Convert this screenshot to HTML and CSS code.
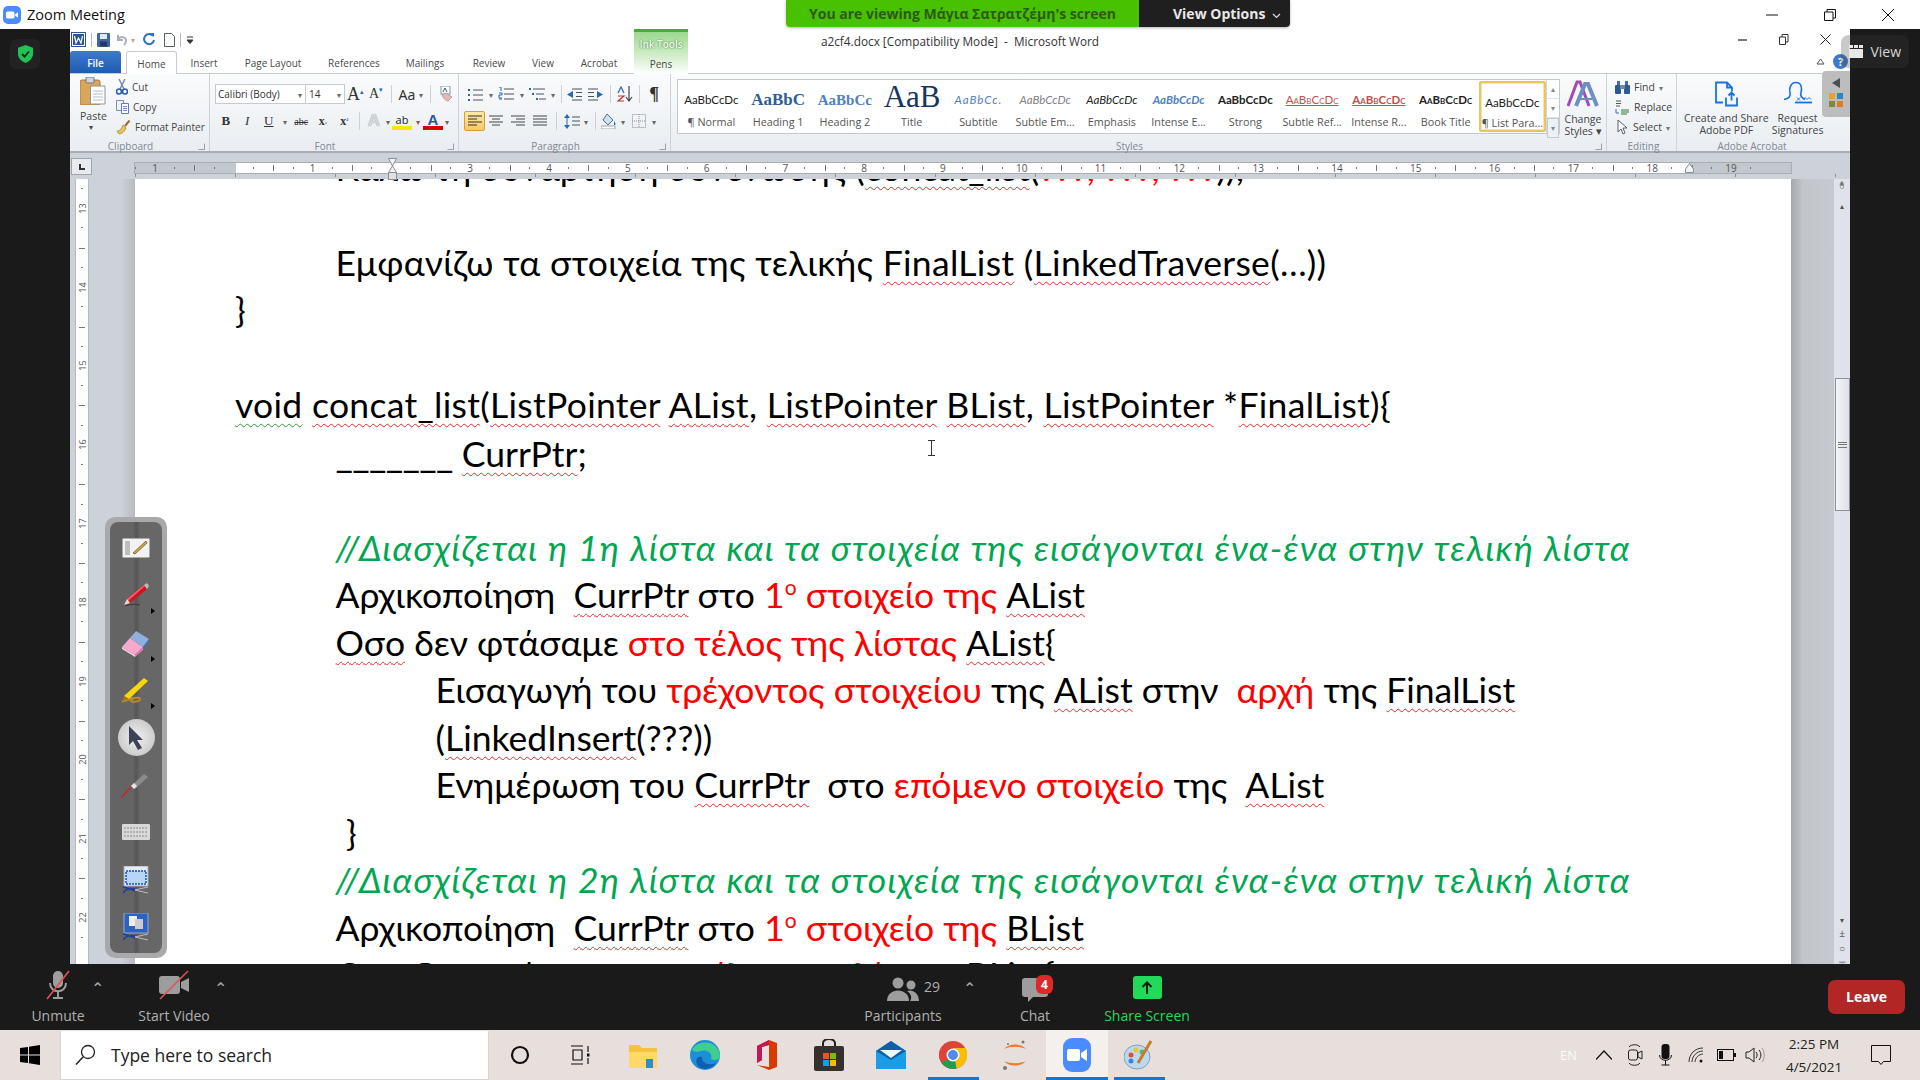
FILE: index.html
```html
<!DOCTYPE html>
<html>
<head>
  <title>Zoom Meeting</title>
  <meta name="viewport" content="width=device-width, initial-scale=1.0">
  <link rel="stylesheet" href="styles.css">
</head>
<body>
<div class="screen">

  <!-- Zoom window title -->
  <div class="zoom-title">
    <svg class="zoom-logo" width="18" height="18" viewBox="0 0 18 18"><rect width="18" height="18" rx="5" fill="#4a8cff"/><rect x="3" y="5.5" width="8.5" height="7" rx="1.6" fill="#fff"/><path d="M12.2 8.3 15 6.2v5.6l-2.8-2.1z" fill="#fff"/></svg>
    <span class="zoom-title-text">Zoom Meeting</span>
    <div class="win-btns">
      <svg width="12" height="12" viewBox="0 0 12 12"><path d="M0 6h12" stroke="#111"/></svg>
      <svg width="12" height="12" viewBox="0 0 12 12"><path d="M.5 3h8.500v8.500H.5zM3 3V.5h8.500V9H9" fill="none" stroke="#111"/></svg>
      <svg width="12" height="12" viewBox="0 0 12 12"><path d="M0 0l12 12M12 0 0 12" stroke="#111"/></svg>
    </div>
  </div>

  <div class="meeting">
    <div class="rail-left">
      <div class="shield-tile">
        <svg width="15" height="18" viewBox="0 0 15 18"><path d="M7.500 0 15 2.800v6C15 13.500 11.500 16.500 7.500 18 3.500 16.500 0 13.500 0 8.800v-6z" fill="#1fc254"/><path d="M4 9l2.600 2.600L11 6.500" fill="none" stroke="#0d2a15" stroke-width="1.800"/></svg>
      </div>
    </div>

    <div class="word">
      <!-- Word title row -->
      <div class="word-title">
        <div class="qat">
          <svg class="q1" width="15" height="15" viewBox="0 0 15 15"><rect x=".5" y=".5" width="14" height="14" fill="#fff" stroke="#2a5699"/><rect x="2" y="2" width="11" height="11" fill="#2a5699"/><path d="M3.500 4l1.500 7 2.500-5 2.500 5 1.500-7" fill="none" stroke="#fff" stroke-width="1.200"/></svg>
          <span class="qat-sep"></span>
          <svg class="q2" width="13" height="14" viewBox="0 0 13 14"><rect width="13" height="14" rx="1" fill="#44649a"/><rect x="3" y="1" width="7" height="5" fill="#dfe8f5"/><rect x="3" y="8.500" width="7" height="5" fill="#1f3a68"/></svg>
          <svg class="q3" width="13" height="13" viewBox="0 0 13 13"><path d="M3 2v5h5M3 7c2-4 8-4 8 1 0 2-1 3-2 4" fill="none" stroke="#a9b0bb" stroke-width="2"/></svg>
          <span class="q-dd">▾</span>
          <svg class="q4" width="12" height="13" viewBox="0 0 12 13"><path d="M10 3a5 5 0 1 0 1 4" fill="none" stroke="#2b73c9" stroke-width="2"/><path d="M7 0h4v4z" fill="#2b73c9"/></svg>
          <svg class="q5" width="11" height="14" viewBox="0 0 11 14"><path d="M.5.5h7l3 3v10H.5z" fill="#fdfdfd" stroke="#58606c"/></svg>
          <span class="qat-sep"></span>
          <svg class="q6" width="8" height="8" viewBox="0 0 8 8"><path d="M1 1h6M1 4h6l-3 3.500z" stroke="#333" fill="#333"/></svg>
        </div>
        <div class="word-doc-name">a2cf4.docx [Compatibility Mode]&nbsp; -&nbsp; Microsoft Word</div>
        <div class="word-btns">
          <svg width="10" height="10" viewBox="0 0 10 10"><path d="M0 5h9" stroke="#222" stroke-width="1.200"/></svg>
          <svg width="10" height="11" viewBox="0 0 10 11"><path d="M.5 3h6v7.500h-6zM3 3V.5h6V8H7" fill="none" stroke="#333"/></svg>
          <svg width="11" height="11" viewBox="0 0 11 11"><path d="M.5.500l10 10M10.500.500l-10 10" stroke="#222"/></svg>
        </div>
      </div>

      <!-- Ribbon tabs -->
      <div class="tabs">
        <div class="tab-file">File</div>
        <div class="tab-home">Home</div>
        <div class="tab w-insert">Insert</div>
        <div class="tab w-layout">Page Layout</div>
        <div class="tab w-refs">References</div>
        <div class="tab w-mail">Mailings</div>
        <div class="tab w-review">Review</div>
        <div class="tab w-view">View</div>
        <div class="tab w-acro">Acrobat</div>
        <div class="tab-pens"><span class="ink-title">Ink Tools</span><span class="pens-text">Pens</span></div>
        <div class="tabs-right">
          <svg width="9" height="7" viewBox="0 0 9 7"><path d="M1 6 4.500 1 8 6z" fill="none" stroke="#555"/></svg>
          <span class="help">?</span>
        </div>
      </div>

      <!-- Ribbon -->
      <div class="ribbon">
        <div class="grp g-clip">
          <div class="grp-body clip-body">
            <div class="paste">
              <svg width="26" height="28" viewBox="0 0 26 28"><rect y="3" width="20" height="25" rx="2" fill="#d9a65c" stroke="#a8783a"/><rect x="6" y="0" width="8" height="6" rx="1" fill="#cfd3da" stroke="#777"/><path d="M10.500 9H25v18H10.500z" fill="#fff" stroke="#8b93a0"/><path d="M13 14h10M13 17h10M13 20h10M13 23h10" stroke="#b6bcc6"/></svg>
              <span class="paste-text">Paste</span>
              <span class="tiny-dd">▾</span>
            </div>
            <div class="clip-list">
              <div class="clip-row"><svg width="12" height="16" viewBox="0 0 12 16"><path d="M3 0l5 10M9 0 4 10" stroke="#7e8a9a" stroke-width="1.500"/><circle cx="3" cy="12.500" r="2.500" fill="none" stroke="#2b5fa8" stroke-width="1.600"/><circle cx="9" cy="12.500" r="2.500" fill="none" stroke="#2b5fa8" stroke-width="1.600"/></svg><span>Cut</span></div>
              <div class="clip-row"><svg width="13" height="14" viewBox="0 0 13 14"><path d="M.5.500h7v10h-7z" fill="#eef3fb" stroke="#7d8ea8"/><path d="M5.500 3.500h7v10h-7z" fill="#fff" stroke="#5d7fb0"/><path d="M7 6.500h4M7 8.500h4M7 10.500h4" stroke="#6b8fc6"/></svg><span>Copy</span></div>
              <div class="clip-row"><svg width="15" height="15" viewBox="0 0 15 15"><path d="M9 6 13.500.5" stroke="#9b6a2d" stroke-width="2"/><path d="M1 11c3 0 5-3 6-6l3 3c-1 3-4 6-7 6z" fill="#e9c05e" stroke="#a5812e" stroke-width=".700"/></svg><span>Format Painter</span></div>
            </div>
          </div>
          <div class="grp-label"><span></span><span class="off-c">Clipboard</span><i class="launcher"></i></div>
        </div>

        <div class="grp g-font">
          <div class="grp-body stack">
            <div class="tool-row">
              <div class="combo c-name"><span>Calibri (Body)</span><b>▾</b></div>
              <div class="combo c-size"><span>14</span><b>▾</b></div>
              <span class="ic w21"><span class="big-a">A<sup>▴</sup></span></span>
              <span class="ic w20"><span class="small-a">A<sup>▾</sup></span></span>
              <span class="sep"></span>
              <span class="ic w20 case-a">Aa</span><span class="dd">▾</span>
              <span class="sep"></span>
              <span class="ic w20"><svg width="16" height="16" viewBox="0 0 16 16"><rect x="3" y="0" width="9" height="8" fill="#fff" stroke="#8a94a4"/><path d="M5 6 7 2l2 4" fill="none" stroke="#2c5d9f"/><path d="M4 9l4-2 6 4-4 4c-2 0-5-3-6-6z" fill="#e9b7b7" stroke="#9a8a8a" stroke-width=".700"/></svg></span>
            </div>
            <div class="tool-row">
              <span class="ic w21h t-b">B</span>
              <span class="ic w21h t-i">I</span>
              <span class="ic w21h t-u">U</span><span class="dd d11">▾</span>
              <span class="ic w21h t-abc">abc</span>
              <span class="ic w21h t-sx">x<sub>₂</sub></span>
              <span class="ic w21h t-sx">x<sup>²</sup></span>
              <span class="sep s4"></span>
              <span class="ic w20 t-fx">A</span><span class="dd">▾</span>
              <span class="ic w20 t-hl">ab</span><span class="dd d11">▾</span>
              <span class="ic w20 t-fc">A</span><span class="dd">▾</span>
            </div>
          </div>
          <div class="grp-label"><span></span><span class="off-c">Font</span><i class="launcher"></i></div>
        </div>

        <div class="grp g-para">
          <div class="grp-body stack para-body">
            <div class="tool-row">
              <span class="ic w20"><svg width="16" height="13" viewBox="0 0 16 13"><path d="M6 2h10M6 7h10M6 12h10" stroke="#4b5361"/><path d="M1 1h2v2H1zM1 6h2v2H1zM1 11h2v2H1z" fill="#2a66b8"/></svg></span><span class="dd d11">▾</span>
              <span class="ic w20"><svg width="16" height="14" viewBox="0 0 16 14"><path d="M6 2h10M6 7h10M6 12h10" stroke="#4b5361"/><path d="M1 0h2v4M1 6h3v2H1v3h3M1 12h3" fill="none" stroke="#2a66b8"/></svg></span><span class="dd d11">▾</span>
              <span class="ic w20"><svg width="18" height="14" viewBox="0 0 18 14"><path d="M5 2h12M8 7h8M11 12h7" stroke="#4b5361"/><path d="M1 1h2v2H1zM4 6h2v2H4zM8 11h2v2H8z" fill="#2a66b8"/></svg></span><span class="dd d11">▾</span>
              <span class="sep sx"></span>
              <span class="ic w21"><svg width="15" height="13" viewBox="0 0 15 13"><path d="M5 1h10M5 12h10M9 4.500h6M9 8.500h6" stroke="#4b5361"/><path d="M0 6.500 6 3v7z" fill="#2a66b8"/></svg></span>
              <span class="ic w21"><svg width="15" height="13" viewBox="0 0 15 13"><path d="M0 1h10M0 12h10M0 4.500h6M0 8.500h6" stroke="#4b5361"/><path d="M15 6.500 9 3v7z" fill="#2a66b8"/></svg></span>
              <span class="sep s4"></span>
              <span class="ic w20 sort-ic"><svg width="16" height="16" viewBox="0 0 16 16"><path d="M12 0v15M9 11l3 4 3-4" fill="none" stroke="#40464f" stroke-width="1.200"/><path d="M1 7l3-6 3 6" fill="none" stroke="#2a66b8" stroke-width="1.200"/><path d="M1 10h6l-6 5h6" fill="none" stroke="#b53a2f" stroke-width="1.200"/></svg></span>
              <span class="sep s4"></span>
              <span class="ic w20 t-pil">¶</span>
            </div>
            <div class="tool-row row2-para">
              <span class="ic w21 on"><svg width="14" height="12" viewBox="0 0 14 12"><path d="M0 1h14M0 4h9M0 7h14M0 10h9" stroke="#333" stroke-width="1.200"/></svg></span>
              <span class="ic w22"><svg width="14" height="12" viewBox="0 0 14 12"><path d="M0 1h14M3 4h8M0 7h14M3 10h8" stroke="#444" stroke-width="1.200"/></svg></span>
              <span class="ic w22"><svg width="14" height="12" viewBox="0 0 14 12"><path d="M0 1h14M5 4h9M0 7h14M5 10h9" stroke="#444" stroke-width="1.200"/></svg></span>
              <span class="ic w22"><svg width="14" height="12" viewBox="0 0 14 12"><path d="M0 1h14M0 4h14M0 7h14M0 10h14" stroke="#444" stroke-width="1.200"/></svg></span>
              <span class="sep"></span>
              <span class="ic w20"><svg width="16" height="15" viewBox="0 0 16 15"><path d="M3 2v11" stroke="#2a66b8"/><path d="M0 4l3-4 3 4zM0 11l3 4 3-4z" fill="#2a66b8"/><path d="M8 3h8M8 7h8M8 11h8" stroke="#4b5361"/></svg></span><span class="dd">▾</span>
              <span class="sep sr"></span>
              <span class="ic w20"><svg width="16" height="16" viewBox="0 0 16 16"><path d="M6 1l6 6-5 5-5-5z" fill="#cfe0f3" stroke="#576a86"/><rect y="13" width="14" height="3" fill="#fff" stroke="#9aa3b0"/><path d="M13 8c2 3 2 4 0 4z" fill="#2a66b8"/></svg></span><span class="dd">▾</span>
              <span class="ic w23"><svg width="14" height="14" viewBox="0 0 14 14"><rect x=".5" y=".5" width="13" height="13" fill="none" stroke="#8b8f96" stroke-dasharray="1 1"/><path d="M7 0v14M0 7h14" stroke="#8b8f96" stroke-dasharray="1 1"/></svg></span><span class="dd">▾</span>
            </div>
          </div>
          <div class="grp-label"><span></span><span class="off-c">Paragraph</span><i class="launcher"></i></div>
        </div>

        <div class="grp g-styles">
          <div class="grp-body styles-body">
            <div class="gallery">
              <div class="style-cell"><span class="sample">AaBbCcDc</span><span class="style-name">¶ Normal</span></div>
              <div class="style-cell"><span class="sample s-h1">AaBbC</span><span class="style-name">Heading 1</span></div>
              <div class="style-cell"><span class="sample s-h2">AaBbCc</span><span class="style-name">Heading 2</span></div>
              <div class="style-cell"><span class="sample s-title">AaB</span><span class="style-name">Title</span></div>
              <div class="style-cell"><span class="sample s-sub">AaBbCc.</span><span class="style-name">Subtitle</span></div>
              <div class="style-cell"><span class="sample s-se">AaBbCcDc</span><span class="style-name">Subtle Em...</span></div>
              <div class="style-cell"><span class="sample s-em">AaBbCcDc</span><span class="style-name">Emphasis</span></div>
              <div class="style-cell"><span class="sample s-ie">AaBbCcDc</span><span class="style-name">Intense E...</span></div>
              <div class="style-cell"><span class="sample s-st">AaBbCcDc</span><span class="style-name">Strong</span></div>
              <div class="style-cell"><span class="sample s-sr">AaBbCcDc</span><span class="style-name">Subtle Ref...</span></div>
              <div class="style-cell"><span class="sample s-ir">AaBbCcDc</span><span class="style-name">Intense R...</span></div>
              <div class="style-cell"><span class="sample s-bt">AaBbCcDc</span><span class="style-name">Book Title</span></div>
              <div class="style-cell selected"><span class="sample">AaBbCcDc</span><span class="style-name">¶ List Para...</span></div>
              <div class="gallery-scroll"><span>▴</span><span>▾</span><span class="gs-more">▾</span></div>
            </div>
            <div class="change-styles">
              <svg width="32" height="28" viewBox="0 0 32 28"><path d="M1 26 10 2h3l9 24" fill="none" stroke="#a24bb5" stroke-width="3"/><path d="M9 26 18 4h3l9 22" fill="none" stroke="#6d8fc4" stroke-width="4"/><path d="M13 19h12" stroke="#6d8fc4" stroke-width="2"/></svg>
              <span>Change</span>
              <span>Styles ▾</span>
            </div>
          </div>
          <div class="grp-label"><span></span><span class="off-c">Styles</span><i class="launcher"></i></div>
        </div>

        <div class="grp g-edit">
          <div class="grp-body edit-body">
            <div class="clip-row"><svg width="15" height="14" viewBox="0 0 15 14"><path d="M2 5V1h3v4M10 5V1h3v4" fill="#3e6fb0"/><rect y="5" width="6" height="9" rx="1" fill="#2c5a99"/><rect x="9" y="5" width="6" height="9" rx="1" fill="#2c5a99"/><rect x="5" y="5" width="5" height="4" fill="#7a8798"/></svg><span>Find</span><em>▾</em></div>
            <div class="clip-row"><svg width="15" height="15" viewBox="0 0 15 15"><path d="M1 1h5M1 3.500h5M1 6h4" stroke="#555"/><path d="M6 10h8M6 12h8M6 14h6" stroke="#2a7a3a"/><path d="M1 9v4h3" fill="none" stroke="#3e6fb0"/></svg><span>Replace</span></div>
            <div class="clip-row"><svg width="14" height="15" viewBox="0 0 14 15"><path d="M3 0v12l3-3 2 5 2-1-2-5h4z" fill="#fff" stroke="#56606e"/></svg><span>Select</span><em>▾</em></div>
          </div>
          <div class="grp-label"><span></span><span class="edit-name">Editing</span><span></span></div>
        </div>

        <div class="grp g-adobe">
          <div class="grp-body adobe-body">
            <div class="adobe-btn">
              <svg width="24" height="26" viewBox="0 0 24 26"><path d="M9 22H2V2h11l5 5v4" fill="none" stroke="#1473e6" stroke-width="1.800"/><path d="M13 2v5h5" fill="none" stroke="#1473e6" stroke-width="1.800"/><path d="M12 17v8h11v-8M17.500 20V12M14.500 15l3-3 3 3" fill="none" stroke="#1473e6" stroke-width="1.800"/></svg>
              <span>Create and Share</span><span>Adobe PDF</span>
            </div>
            <div class="adobe-btn">
              <svg width="30" height="26" viewBox="0 0 30 26"><path d="M1 19c5-1 7-3 6-7-1-3 0-10 6-10s6 7 5 10c-1 3 0 5 4 7" fill="none" stroke="#1473e6" stroke-width="1.600"/><path d="M12 22h17" stroke="#1473e6" stroke-width="1.800"/><path d="M14 17l3 3M17 17l-3 3M20 19l2-2 2 2 2-2 2 2" fill="none" stroke="#1473e6"/></svg>
              <span>Request</span><span>Signatures</span>
            </div>
          </div>
          <div class="grp-label"><span></span><span>Adobe Acrobat</span><span></span></div>
        </div>
      </div>

      <!-- Horizontal ruler -->
      <div class="ruler-row">
        <div class="ruler-corner"><span></span></div>
        <div class="ruler-band">
          <div class="ruler-shade-l"></div>
          <div class="ruler-shade-r"></div>
          <div class="ruler-cells">
            <span>1</span><span></span><span>1</span><span></span><span>3</span><span>4</span><span>5</span><span>6</span><span>7</span><span>8</span><span>9</span><span>10</span><span>11</span><span>12</span><span>13</span><span>14</span><span>15</span><span>16</span><span>17</span><span>18</span><span>19</span>
          </div>
        </div>
      </div>

      <!-- Document -->
      <div class="doc-area">
        <div class="vruler">
          <div class="vruler-cells">
            <span><i>13</i></span><span><i>14</i></span><span><i>15</i></span><span><i>16</i></span><span><i>17</i></span><span><i>18</i></span><span><i>19</i></span><span><i>20</i></span><span><i>21</i></span><span><i>22</i></span>
          </div>
        </div>
        <div class="gutter-l"></div>
        <div class="page">
          <div class="lines">
            <div class="line in1 first">Καλώ τη συνάρτηση συνένωσης (<span class="sp">concat_list</span>(<span class="red">???, ???, ???</span>));</div>
            <div class="line"></div>
            <div class="line in1 wide">Εμφανίζω τα στοιχεία της τελικής <span class="sp">FinalList</span> (<span class="sp">LinkedTraverse</span>(…))</div>
            <div class="line">}</div>
            <div class="line"></div>
            <div class="line wide"><span class="gsp">void</span> <span class="sp">concat_list</span>(<span class="sp">ListPointer</span> <span class="sp">AList</span>, <span class="sp">ListPointer</span> <span class="sp">BList</span>, <span class="sp">ListPointer</span> *<span class="sp">FinalList</span>){</div>
            <div class="line in1"><span class="blank">_______</span> <span class="sp">CurrPtr</span>;</div>
            <div class="line"></div>
            <div class="line in1 comment">//Διασχίζεται η 1η λίστα και τα στοιχεία της εισάγονται ένα-ένα στην τελική λίστα</div>
            <div class="line in1">Αρχικοποίηση&nbsp; <span class="sp">CurrPtr</span> στο <span class="red">1<sup>ο</sup> στοιχείο της</span> <span class="sp">AList</span></div>
            <div class="line in1"><span class="sp">Οσο</span> δεν φτάσαμε <span class="red">στο τέλος της λίστας</span> <span class="sp">AList</span>{</div>
            <div class="line in2">Εισαγωγή του <span class="red">τρέχοντος στοιχείου</span> της <span class="sp">AList</span> στην&nbsp; <span class="red">αρχή</span> της <span class="sp">FinalList</span></div>
            <div class="line in2">(<span class="sp">LinkedInsert</span>(???))</div>
            <div class="line in2">Ενημέρωση του <span class="sp">CurrPtr</span>&nbsp; στο <span class="red">επόμενο στοιχείο</span> της&nbsp; <span class="sp">AList</span></div>
            <div class="line in1b">}</div>
            <div class="line in1 comment">//Διασχίζεται η 2η λίστα και τα στοιχεία της εισάγονται ένα-ένα στην τελική λίστα</div>
            <div class="line in1">Αρχικοποίηση&nbsp; <span class="sp">CurrPtr</span> στο <span class="red">1<sup>ο</sup> στοιχείο της</span> <span class="sp">BList</span></div>
            <div class="line in1"><span class="sp">Οσο</span> δεν φτάσαμε <span class="red">στο τέλος της λίστας</span> <span class="sp">BList</span>{</div>
          </div>
        </div>
        <div class="gutter-r"></div>
        <div class="vscroll">
          <div class="vs-tools">
            <svg width="14" height="14" viewBox="0 0 14 14"><path d="M1 2h9v7H1z" fill="#fff" stroke="#666"/><path d="M4 9l4-3 4 2v4H6z" fill="#ddd" stroke="#666"/></svg>
            <svg width="13" height="13" viewBox="0 0 13 13"><path d="M3 8V4h1v3-5h1v5-6h1v6-5h1v5-3h1v7H4z" fill="#eee" stroke="#666" stroke-width=".800"/></svg>
          </div>
          <span class="vs-arrow">▲</span>
          <div class="vs-thumb"><span></span></div>
          <span class="vs-grow"></span>
          <span class="vs-arrow">▼</span>
          <span class="vs-nav">±</span>
          <span class="vs-nav">○</span>
          <span class="vs-nav">∓</span>
        </div>
      </div>
    </div>

    <div class="rail-right"></div>
  </div>

  <!-- Zoom controls -->
  <div class="zoom-bar">
    <div class="zb-item zb-mic">
      <svg width="30" height="30" viewBox="0 0 30 30"><rect x="10" y="1" width="10" height="17" rx="5" fill="#9d9d9d"/><path d="M7 13c0 11 16 11 16 0M15 21v6M10 28h10" fill="none" stroke="#9d9d9d" stroke-width="2"/><path d="M4 29 26 1" stroke="#e05252" stroke-width="1.600"/></svg>
      <span>Unmute</span>
    </div>
    <span class="caret caret-mic">⌃</span>
    <div class="zb-item zb-video">
      <svg width="32" height="30" viewBox="0 0 32 30"><rect x="1" y="6" width="21" height="18" rx="3" fill="#9d9d9d"/><path d="M23 12l8-4v14l-8-4z" fill="#9d9d9d"/><path d="M2 29 30 1" stroke="#e05252" stroke-width="1.600"/></svg>
      <span>Start Video</span>
    </div>
    <span class="caret caret-vid">⌃</span>
    <div class="zb-item zb-part">
      <div class="part-top">
        <svg width="32" height="24" viewBox="0 0 32 24"><circle cx="11" cy="6" r="5.500" fill="#9d9d9d"/><path d="M0 24c0-14 22-14 22 0z" fill="#9d9d9d"/><circle cx="24" cy="8" r="4.500" fill="#9d9d9d"/><path d="M23 24c3-4 0-8-3-10 5-2 12 2 12 10z" fill="#9d9d9d"/></svg>
        <span class="part-count">29</span>
      </div>
      <span>Participants</span>
    </div>
    <span class="caret caret-part">⌃</span>
    <div class="zb-item zb-chat">
      <div class="chat-top">
        <svg width="26" height="24" viewBox="0 0 26 24"><path d="M3 0h20a3 3 0 0 1 3 3v13a3 3 0 0 1-3 3H11l-5 5v-5H3a3 3 0 0 1-3-3V3a3 3 0 0 1 3-3z" fill="#9d9d9d"/></svg>
        <span class="badge">4</span>
      </div>
      <span>Chat</span>
    </div>
    <div class="zb-item zb-share">
      <div class="share-ic"><svg width="12" height="13" viewBox="0 0 12 13"><path d="M6 13V2M1.500 6 6 1.500 10.500 6" fill="none" stroke="#0b1f10" stroke-width="2"/></svg></div>
      <span>Share Screen</span>
    </div>
    <div class="leave">Leave</div>
  </div>

  <!-- Windows taskbar -->
  <div class="taskbar">
    <div class="start">
      <svg width="20" height="20" viewBox="0 0 20 20"><path d="M0 3l8-1v7.500H0zM9 1.800 20 0v9.500H9zM0 10.500h8V18l-8-1zM9 10.500h11V20L9 18.200z" fill="#000"/></svg>
    </div>
    <div class="search">
      <svg width="22" height="22" viewBox="0 0 22 22"><circle cx="13" cy="8" r="6.500" fill="none" stroke="#222" stroke-width="1.300"/><path d="M8 13 1 20.500" stroke="#222" stroke-width="1.500"/></svg>
      <span>Type here to search</span>
    </div>
    <div class="task-sys">
      <svg width="20" height="20" viewBox="0 0 20 20"><circle cx="10" cy="10" r="8" fill="none" stroke="#111" stroke-width="2.200"/></svg>
      <svg width="20" height="20" viewBox="0 0 20 20"><path d="M1 1h12M1 19h12M3 5h9v10H3zM18 1v6M18 13v6" fill="none" stroke="#111" stroke-width="1.200"/><rect x="17" y="8.500" width="2.500" height="3" fill="#111"/></svg>
    </div>
    <div class="task-apps">
      <span class="app"><svg width="28" height="26" viewBox="0 0 28 26"><path d="M0 3h10l3 3h15v20H0z" fill="#f4c23d"/><path d="M0 10h28v16H0z" fill="#ffd968"/><path d="M17 17h7v9h-7z" fill="#2c8ad8"/></svg></span>
      <span class="app"><svg width="30" height="30" viewBox="0 0 30 30"><circle cx="15" cy="15" r="15" fill="#1d8fd9"/><path d="M2 10C6 0 28-2 30 16c0 4-6 5-9 3 2-6-4-10-10-8-4 1-7 1-9-1z" fill="#3ecf8e"/><path d="M12 17c0 6 6 9 14 6-4 6-13 8-18 3-3-4-2-11 4-9z" fill="#0f5fb0"/></svg></span>
      <span class="app"><svg width="24" height="30" viewBox="0 0 24 30"><path d="M2 6 14 0l8 3v24l-8 3-12-5 12 2V5L7 7v13l-5 3z" fill="#d83b01"/><path d="M2 6 14 0v5L7 7v13l-5 3z" fill="#c2185b"/></svg></span>
      <span class="app"><svg width="30" height="32" viewBox="0 0 30 32"><path d="M9 8V4a6 4 0 0 1 12 0v4" fill="none" stroke="#222" stroke-width="2"/><rect y="7" width="30" height="25" rx="2" fill="#34312f"/><rect x="9" y="14" width="6" height="6" fill="#f25022"/><rect x="16" y="14" width="6" height="6" fill="#7fba00"/><rect x="9" y="21" width="6" height="6" fill="#00a4ef"/><rect x="16" y="21" width="6" height="6" fill="#ffb900"/></svg></span>
      <span class="app"><svg width="30" height="28" viewBox="0 0 30 28"><path d="M0 10 15 0l15 10v18H0z" fill="#1a9ce6"/><path d="M0 10 15 0l15 10-15 9z" fill="#0f5ea8"/><path d="M4 9h22l-11 8z" fill="#eef6fc"/></svg></span>
      <span class="app app-line"><svg width="28" height="28" viewBox="0 0 28 28"><circle cx="14" cy="14" r="14" fill="#db4437"/><path d="M14 14 1.500 20A14 14 0 0 1 3 5.500z" fill="#db4437"/><path d="M2 21a14 14 0 0 0 15 6.700L22 16z" fill="#1e9e53"/><path d="M14 7h12.500a14 14 0 0 1-9 20.500z" fill="#fbbc05"/><circle cx="14" cy="14" r="6.500" fill="#fff"/><circle cx="14" cy="14" r="5" fill="#4d8bf5"/></svg></span>
      <span class="app"><svg width="26" height="32" viewBox="0 0 26 32"><path d="M2 10c5-6 17-6 22 0-6-3-16-3-22 0zM2 22c5 6 17 6 22 0-6 3-16 3-22 0z" fill="#f37726"/><circle cx="21" cy="3" r="1.500" fill="#767677"/><circle cx="3" cy="29" r="2" fill="#767677"/><circle cx="6" cy="5" r="1" fill="#767677"/></svg></span>
      <span class="app app-on"><svg width="28" height="34" viewBox="0 0 28 34"><rect width="28" height="34" rx="9" fill="#4a8cff"/><rect x="4" y="11" width="13" height="12" rx="2" fill="#fff"/><path d="M18 15l6-4v12l-6-4z" fill="#fff"/></svg></span>
      <span class="app app-line"><svg width="30" height="30" viewBox="0 0 30 30"><ellipse cx="13" cy="17" rx="13" ry="12" fill="#bcd9ee" stroke="#7f9fbd"/><circle cx="7" cy="15" r="2.500" fill="#e44b3a"/><circle cx="12" cy="10" r="2.500" fill="#f2c230"/><circle cx="18" cy="12" r="2.500" fill="#5db85c"/><circle cx="7" cy="21" r="2.500" fill="#3f82d6"/><path d="M14 23 27 1" stroke="#c77b2d" stroke-width="3"/></svg></span>
    </div>
    <div class="tray">
      <span class="tray-en">EN</span>
      <svg class="t-up" width="16" height="10" viewBox="0 0 16 10"><path d="M0 9.500 8 1l8 8.500" fill="none" stroke="#111" stroke-width="1.200"/></svg>
      <svg class="t-cam" width="15" height="22" viewBox="0 0 15 22"><path d="M1 3c2-3 9-3 11 0M1 19c2 3 9 3 11 0" fill="none" stroke="#222"/><rect x=".5" y="6" width="9" height="10" rx="2" fill="none" stroke="#222"/><path d="M10 9l4-2v8l-4-2z" fill="none" stroke="#222"/></svg>
      <svg class="t-mic" width="13" height="22" viewBox="0 0 13 22"><rect x="2.500" width="8" height="15" rx="3" fill="#111"/><path d="M.5 11c0 7 12 7 12 0M6.500 16v5M2.500 21h8" fill="none" stroke="#111"/></svg>
      <svg class="t-wifi" width="16" height="16" viewBox="0 0 16 16"><path d="M1 15C1 7 7 1 15 1M4 15c0-6 5-11 11-11M7 15c0-4 4-8 8-8" fill="none" stroke="#333"/><circle cx="13" cy="14" r="1.500" fill="#111"/></svg>
      <svg class="t-bat" width="19" height="12" viewBox="0 0 19 12"><rect x=".5" y=".5" width="16" height="11" fill="none" stroke="#111"/><rect x="2" y="2" width="4" height="8" fill="#111"/><rect x="17" y="4" width="2" height="4" fill="#111"/></svg>
      <svg class="t-vol" width="20" height="18" viewBox="0 0 20 18"><path d="M1 6h3l5-4v14l-5-4H1z" fill="none" stroke="#222"/><path d="M11 6c1.500 2 1.500 4 0 6M14 4c2.500 3 2.500 7 0 10" fill="none" stroke="#222"/><path d="M17 2c3 4 3 10 0 14" fill="none" stroke="#999"/></svg>
      <div class="clock"><span>2:25 PM</span><span>4/5/2021</span></div>
      <svg class="t-note" width="20" height="20" viewBox="0 0 20 20"><path d="M.5.5h19v16h-7l-2.500 3-2.500-3h-7z" fill="none" stroke="#111"/></svg>
    </div>
  </div>

  <!-- overlays from the meeting window -->
  <div class="banner">
    <div class="banner-msg">You are viewing Μάγια Σατρατζέμη's screen</div>
    <div class="banner-opt">View Options <svg width="9" height="6" viewBox="0 0 9 6"><path d="M1 1l3.500 3.500L8 1" fill="none" stroke="#ddd" stroke-width="1.200"/></svg></div>
  </div>

  <div class="view-btn">
    <svg width="14" height="13" viewBox="0 0 14 13"><rect y="4" width="14" height="9" fill="#e8e8e8"/><path d="M0 0h4v3H0zM5 0h4v3H5zM10 0h4v3h-4z" fill="#e8e8e8"/></svg>
    <span>View</span>
  </div>

  <div class="acro-pane">
    <svg width="10" height="10" viewBox="0 0 10 10"><path d="M9 0v10L1 5z" fill="#4b4f55"/></svg>
    <div class="acro-tiles"><i class="t-y"></i><i class="t-b"></i><i class="t-g"></i><i class="t-o"></i></div>
  </div>

  <!-- ruler markers sit on the band -->
  <svg class="indent-mark" width="9" height="22" viewBox="0 0 9 22"><path d="M.5.5h8L4.500 8l4 6.500H.5L4.500 8z" fill="#f2f3f5" stroke="#8a8e95"/><rect x=".5" y="14.500" width="8" height="7" fill="#dfe1e5" stroke="#8a8e95"/></svg>
  <svg class="right-mark" width="9" height="10" viewBox="0 0 9 10"><path d="M.5 9.500V6L4.500.5l4 5.500v3.500z" fill="#f2f3f5" stroke="#8a8e95"/></svg>

  <div class="ink-bar">
    <div class="ink-inner">
      <span class="ink-ic"><svg width="28" height="20" viewBox="0 0 28 20"><rect x=".5" y=".5" width="27" height="19" rx="1" fill="#f2f2f2" stroke="#aaa"/><rect x="3" y="3" width="5" height="14" fill="#bdbdbd"/><path d="M11 15 24 3l1 2-12 11z" fill="#e4a72c" stroke="#333" stroke-width=".600"/></svg></span>
      <span class="ink-ic"><svg width="30" height="28" viewBox="0 0 30 28"><path d="M4 25c5-2 11-2 15-1" fill="none" stroke="#3a3a3a" stroke-width="1.200"/><path d="M3 24 6 18 23 4l3 4L9 22z" fill="#d6101e"/><path d="M6 18 23 4l1 1L7 20z" fill="#f2616a"/><path d="M23 4l3-2 2 3-2 3z" fill="#bcbcbc"/><path d="M3 24l3-6 3 4z" fill="#ddd"/></svg><i class="ink-tri"></i></span>
      <span class="ink-ic"><svg width="28" height="29" viewBox="0 0 28 29"><path d="M0 19 8 10 21 19 13 27z" fill="#f7a8cc"/><path d="M8 10 14 3 27 11 21 19z" fill="#8fb0dc"/><path d="M21 19 27 11 27 13 21 22z" fill="#3d6fc0"/><path d="M13 27 21 19 21 22 13 29z" fill="#e57fb0"/><path d="M0 19 13 27 13 29 0 21z" fill="#f4c9dc"/></svg><i class="ink-tri"></i></span>
      <span class="ink-ic"><svg width="30" height="28" viewBox="0 0 30 28"><path d="M1 26c5-5 14-5 10-2s8 2 8-1-8 0-16 2" fill="none" stroke="#b8892b" stroke-width="2"/><path d="M3 20 23 2l4 3L8 23z" fill="#f5d90a"/><path d="M3 20l5 3-6 2z" fill="#a07a20"/></svg><i class="ink-tri"></i></span>
      <span class="ink-cursor"><svg width="16" height="24" viewBox="0 0 16 24"><path d="M1 0v19l4-4 5 9 4-2-5-8h6z" fill="#3e4259"/></svg></span>
      <span class="ink-ic"><svg width="30" height="28" viewBox="0 0 30 28"><path d="M0 27 11 15" stroke="#c9252b" stroke-width="1.500"/><path d="M10 15 23 3l4 3-13 12z" fill="#8b8b8b"/><path d="M10 15l3-3 3 3-3 3z" fill="#e6e6e6"/></svg></span>
      <span class="ink-ic"><svg width="28" height="16" viewBox="0 0 28 16"><rect width="28" height="16" rx="1" fill="#d8d8d8"/><path d="M2 4h24M2 8h24M2 12h24" stroke="#8a8a8a" stroke-dasharray="2 1"/></svg></span>
      <span class="ink-ic"><svg width="26" height="28" viewBox="0 0 26 28"><rect x="1" width="24" height="20" fill="#e8edf4" stroke="#aaa"/><rect x="3" y="5" width="20" height="13" fill="#b8d5f7" stroke="#0a4fd6" stroke-dasharray="2 1" stroke-width="1.500"/><path d="M0 27c4-5 8-5 12-4M0 21c4 1 8 2 12 4" fill="none" stroke="#1a3ea5" stroke-width="1.500"/><path d="M12 24l13-3M12 24l13 3" stroke="#bbb"/></svg></span>
      <span class="ink-ic"><svg width="26" height="28" viewBox="0 0 26 28"><rect x="1" width="24" height="20" fill="#2c62c6" stroke="#9ab"/><rect x="6" y="3" width="8" height="10" fill="#eee"/><rect x="12" y="6" width="8" height="10" fill="#ccc"/><path d="M0 27c4-5 8-5 12-4M0 21c4 1 8 2 12 4" fill="none" stroke="#1a3ea5" stroke-width="1.500"/><path d="M12 24l13-3M12 24l13 3" stroke="#bbb"/></svg></span>
    </div>
  </div>

  <svg class="ibeam" width="7" height="16" viewBox="0 0 7 16"><path d="M0 .5h7M0 15.500h7M3.500 .5v15" stroke="#333"/></svg>

</div>
</body>
</html>
```

FILE: styles.css
```css
* {
  box-sizing: border-box;
}

body {
  margin: 0;
  background: #1a1a1a;
  font-family: "Open Sans", "Noto Sans", sans-serif;
  color: #444;
}

.screen {
  position: relative;
  width: 1920px;
  height: 1080px;
  overflow: hidden;
  display: flex;
  flex-direction: column;
}

/* Zoom title */
.zoom-title {
  height: 29px;
  background: #fff;
  display: flex;
  align-items: center;
  padding-left: 3px;
  color: #111;
}

.zoom-title-text {
  font-size: 14.500px;
  margin-left: 6px;
}

.win-btns {
  margin-left: auto;
  display: flex;
  gap: 46px;
  padding-right: 26px;
}

/* middle part */
.meeting {
  height: 935px;
  display: flex;
}

.rail-left,
.rail-right {
  width: 70px;
  background: #1a1a1a;
}

.shield-tile {
  width: 30px;
  height: 30px;
  margin: 10px 0 0 10px;
  background: #222;
  border-radius: 6px;
  display: flex;
  align-items: center;
  justify-content: center;
}

.word {
  width: 1780px;
  background: #fff;
  display: flex;
  flex-direction: column;
}

.word-title {
  height: 21px;
  display: grid;
  grid-template-columns: 1fr auto 1fr;
  align-items: center;
}

.qat {
  display: flex;
  align-items: center;
  padding-left: 1px;
}

.qat-sep {
  width: 1px;
  height: 14px;
  background: #b9bec6;
  margin: 0 5px;
}

.q3 { margin-left: 5px; }
.q-dd { font-size: 8px; color: #aaa; margin: 0 8px 0 3px; }
.q5 { margin-left: 9px; }

.word-doc-name {
  font-size: 11.800px;
  color: #333;
  padding-top: 2px;
}

.word-btns {
  display: flex;
  justify-content: flex-end;
  align-items: center;
  gap: 31px;
  padding-right: 19px;
}

/* tabs */
.tabs {
  height: 24px;
  display: flex;
  align-items: flex-end;
  font-size: 10px;
  color: #4a4a4a;
  border-bottom: 1px solid #c8ccd2;
}

.tab-file {
  width: 51px;
  height: 22px;
  padding-top: 1px;
  border-radius: 3px 3px 0 0;
  background: linear-gradient(#3e79c9, #1e5cb3);
  color: #fff;
  display: flex;
  align-items: center;
  justify-content: center;
  font-weight: 600;
}

.tab-home {
  width: 51px;
  height: 23px;
  padding-top: 1px;
  margin-left: 5px;
  margin-bottom: -1px;
  background: #fff;
  border: 1px solid #c8ccd2;
  border-bottom: none;
  border-radius: 3px 3px 0 0;
  display: flex;
  align-items: center;
  justify-content: center;
}

.tab {
  height: 22px;
  padding-top: 2px;
  display: flex;
  align-items: center;
  justify-content: center;
}

.w-insert { width: 54px; }
.w-layout { width: 84px; }
.w-refs { width: 78px; }
.w-mail { width: 64px; }
.w-review { width: 64px; }
.w-view { width: 44px; }
.w-acro { width: 68px; }

.tab-pens {
  width: 54px;
  height: 45px;
  margin-left: 1px;
  margin-bottom: -1px;
  border-top: 3px solid #3bb52e;
  background: linear-gradient(#9cd98e, #d6eecf 60%, #fff);
  display: flex;
  flex-direction: column;
  align-items: center;
}

.ink-title {
  margin-top: 5px;
  font-size: 10px;
  color: #f4faf1;
  font-weight: 600;
  text-shadow: 0 0 2px #5c8f52, 0 0 1px #5c8f52;
}

.pens-text {
  margin-top: 6px;
}

.tabs-right {
  margin-left: auto;
  height: 24px;
  display: flex;
  align-items: center;
  gap: 8px;
  padding: 0 2px 0 0;
}

.help {
  width: 15px;
  height: 15px;
  border-radius: 50%;
  background: #3f78c8;
  color: #fff;
  font-size: 11px;
  font-weight: 700;
  line-height: 15px;
  text-align: center;
}

/* ribbon */
.ribbon {
  height: 79px;
  display: flex;
  background: linear-gradient(#fafbfc, #e9edf1);
  border-bottom: 2px solid #a9adb3;
  font-size: 10px;
}

.grp {
  display: flex;
  flex-direction: column;
  border-right: 1px solid #cfd3d9;
}

.grp-body {
  height: 65px;
}

.grp-label {
  height: 12px;
  padding-top: 1px;
  display: grid;
  grid-template-columns: 1fr auto 1fr;
  align-items: center;
  color: #808894;
  font-size: 10px;
  line-height: 12px;
}

.off-c {
  margin-right: 18px;
}

.edit-name {
  margin-left: 4px;
}

.launcher {
  justify-self: end;
  width: 7px;
  height: 7px;
  margin-right: 4px;
  border: 1px solid #9aa2ad;
  border-top-color: transparent;
  border-left-color: transparent;
}

.g-clip { width: 140px; }
.g-font { width: 249px; }
.g-para { width: 212px; }
.g-styles { width: 936px; }
.g-edit { width: 70px; }
.g-adobe { width: 150px; border-right: none; }

.clip-body {
  display: flex;
  padding-top: 3px;
}

.paste {
  width: 46px;
  padding-left: 10px;
  display: flex;
  flex-direction: column;
  align-items: flex-start;
}

.paste-text {
  font-size: 10.500px;
  margin-top: 5px;
  line-height: 13px;
}

.tiny-dd {
  font-size: 8px;
  line-height: 8px;
  margin-left: 9px;
}

.clip-list {
  display: flex;
  flex-direction: column;
}

.clip-row {
  height: 20px;
  display: flex;
  align-items: center;
  gap: 4px;
  white-space: nowrap;
}

.clip-row svg {
  flex: none;
}

.clip-row em {
  font-style: normal;
  font-size: 8px;
  color: #777;
}

.stack {
  padding: 10px 0 0 5px;
  display: flex;
  flex-direction: column;
  gap: 7px;
}

.tool-row {
  height: 20px;
  display: flex;
  align-items: center;
}

.combo {
  height: 20px;
  display: flex;
  align-items: center;
  justify-content: space-between;
  padding: 0 3px 0 2px;
  background: #fff;
  border: 1px solid #c5cad1;
  font-size: 10px;
  color: #333;
}

.combo b {
  font-size: 8px;
  font-weight: 400;
  color: #666;
}

.c-name { width: 91px; }
.c-size { width: 40px; margin-left: -1px; padding-left: 3px; }

.ic {
  height: 20px;
  display: flex;
  align-items: center;
  justify-content: center;
  flex: none;
}

.w20 { width: 20px; }
.w21 { width: 21px; }
.w21h { width: 21.500px; }
.w22 { width: 22px; }
.w23 { width: 23px; }

.dd {
  width: 8px;
  flex: none;
  font-size: 8px;
  color: #666;
  text-align: center;
}

.d11 { width: 11px; }

.sep {
  width: 1px;
  height: 18px;
  flex: none;
  margin: 0 5px;
  background: #cdd1d7;
}

.sx { margin: 0 2.500px; }
.s4 { margin: 0 4px; }
.sr { margin: 0 3px 0 5px; }

.big-a,
.small-a,
.case-a,
.t-b,
.t-i,
.t-u,
.t-abc,
.t-sx,
.t-pil {
  font-family: "Liberation Serif", serif;
  color: #333;
}

.big-a { font-size: 18px; }
.small-a { font-size: 14px; }
.big-a sup,
.small-a sup { font-size: 7px; color: #2a66b8; vertical-align: 6px; line-height: 0; }
.case-a { font-size: 14px; font-family: "Noto Sans", sans-serif; }
.t-b { font-size: 13px; font-weight: 700; }
.t-i { font-size: 13px; font-style: italic; }
.t-u { font-size: 13px; text-decoration: underline; }
.t-abc { font-size: 10px; text-decoration: line-through; }
.t-sx { font-size: 12px; font-weight: 700; }
.t-sx sub,
.t-sx sup { font-size: 7px; color: #2a66b8; line-height: 0; }
.t-pil { font-size: 18px; font-weight: 700; }
.t-fx { font-size: 17px; font-weight: 700; color: #d4d8dd; text-shadow: 0 0 1px #888; font-family: "Liberation Sans", sans-serif; }
.t-hl { font-size: 11px; color: #222; border-bottom: 4px solid #f5e900; height: 17px; line-height: 11px; }
.t-fc { font-size: 15px; font-weight: 700; color: #2a5699; border-bottom: 4px solid #d90000; height: 18px; line-height: 13px; font-family: "Liberation Sans", sans-serif; }

.para-body {
  padding-left: 6px;
}

.row2-para {
  margin-left: -1px;
}

.on {
  background: linear-gradient(#fde9a8, #f9c866);
  border: 1px solid #d69f35;
  border-radius: 2px;
}

.styles-body {
  display: flex;
  padding: 5px 0 0 6px;
}

.gallery {
  width: 883px;
  height: 55px;
  display: flex;
  background: #fff;
  border: 1px solid #c4c9d0;
}

.style-cell {
  width: 66.750px;
  flex: none;
  display: flex;
  flex-direction: column;
  align-items: center;
  overflow: hidden;
}

.sample {
  height: 35px;
  line-height: 40px;
  width: 56px;
  text-align: center;
  overflow: hidden;
  white-space: nowrap;
  font-family: Lato, sans-serif;
  font-size: 11.500px;
  color: #222;
}

.s-h1 { font-family: "Liberation Serif", serif; font-weight: 700; font-size: 17px; color: #2f5e96; }
.s-h2 { font-family: "Liberation Serif", serif; font-weight: 700; font-size: 15px; color: #4f81bd; }
.s-title { font-family: "Liberation Serif", serif; font-size: 31px; color: #17365d; line-height: 33px; }
.s-sub { font-style: italic; color: #4f81bd; letter-spacing: 1px; }
.s-se { font-style: italic; color: #808080; }
.s-em { font-style: italic; }
.s-ie { font-style: italic; font-weight: 700; color: #4f81bd; }
.s-st { font-weight: 700; }
.s-sr { font-variant: small-caps; color: #c0504d; text-decoration: underline; }
.s-ir { font-variant: small-caps; color: #c0504d; font-weight: 700; text-decoration: underline; }
.s-bt { font-variant: small-caps; font-weight: 700; }

.style-name {
  font-size: 10.800px;
  line-height: 13px;
  white-space: nowrap;
  color: #555;
}

.selected {
  margin: 1px 0;
  border: 2px solid #e8c465;
  border-radius: 2px;
  outline: 1px solid #f4e3ae;
  outline-offset: -3px;
}

.selected .sample { height: 33px; }

.gallery-scroll {
  flex: 1;
  display: flex;
  flex-direction: column;
  border-left: 1px solid #d3d7dc;
  font-size: 8px;
  color: #888;
  text-align: center;
}

.gallery-scroll span {
  flex: 1;
  line-height: 18px;
  border-bottom: 1px solid #e0e3e7;
}

.gallery-scroll .gs-more {
  background: #eef1f4;
  border: 1px solid #c4c9d0;
}

.change-styles {
  flex: 1;
  display: flex;
  flex-direction: column;
  align-items: center;
  font-size: 10.500px;
  line-height: 12px;
}

.change-styles svg {
  margin-bottom: 5px;
  margin-top: 1px;
}

.edit-body {
  padding: 3px 0 0 8px;
  display: flex;
  flex-direction: column;
  font-size: 10.500px;
}

.adobe-body {
  display: flex;
  padding: 6px 0 0 7px;
}

.adobe-btn {
  display: flex;
  flex-direction: column;
  align-items: center;
  line-height: 12px;
  white-space: nowrap;
  font-size: 10.500px;
}

.adobe-btn svg {
  height: 27px;
  margin-bottom: 5px;
}

.adobe-btn + .adobe-btn {
  margin-left: 3px;
}

/* horizontal ruler */
.ruler-row {
  height: 26px;
  display: flex;
  align-items: flex-start;
  background:
    linear-gradient(90deg, #8b8f96 1px, transparent 1px) 65px 21px / 100px 3px repeat-x,
    #cdd1d8;
}

.ruler-corner {
  width: 21px;
  height: 17px;
  margin: 5px 0 0 1px;
  background: #e8eaee;
  border: 1px solid #a1a5ab;
  display: flex;
  align-items: center;
  justify-content: center;
}

.ruler-corner span {
  width: 6px;
  height: 6px;
  border-left: 2px solid #333;
  border-bottom: 2px solid #333;
}

.ruler-band {
  position: relative;
  width: 1658px;
  height: 12px;
  margin: 9px 0 0 42px;
  overflow: hidden;
  background: #fdfdfe;
  border: 1px solid #a9adb4;
}

.ruler-shade-l,
.ruler-shade-r {
  position: absolute;
  top: 0;
  height: 10px;
  background: #c3c7ce;
}

.ruler-shade-l { left: 0; width: 101px; }
.ruler-shade-r { right: 0; width: 102px; }

.ruler-cells {
  position: relative;
  display: flex;
  height: 10px;
  margin-left: -19.400px;
}

.ruler-cells span {
  width: 78.800px;
  flex: none;
  text-align: center;
  font-size: 10px;
  line-height: 10px;
  color: #555;
  background:
    linear-gradient(#777, #777) 0 2px / 1px 6px no-repeat,
    linear-gradient(#777, #777) 25% 4px / 1px 2px no-repeat,
    linear-gradient(#777, #777) 75% 4px / 1px 2px no-repeat;
}

.indent-mark {
  position: absolute;
  top: 158px;
  left: 388px;
}

.right-mark {
  position: absolute;
  top: 163px;
  left: 1685px;
}

/* document */
.doc-area {
  height: 785px;
  display: flex;
  background: #cdd1d8;
  overflow: hidden;
}

.vruler {
  width: 14px;
  height: 785px;
  margin-left: 5px;
  background: #fdfdfe;
  border-left: 1px solid #b5b9c0;
  border-right: 1px solid #b5b9c0;
  overflow: hidden;
}

.vruler-cells {
  margin-top: -10px;
  display: flex;
  flex-direction: column;
}

.vruler-cells span {
  height: 78.800px;
  flex: none;
  display: flex;
  align-items: center;
  justify-content: center;
  background:
    linear-gradient(#777, #777) 3px 0 / 6px 1px no-repeat,
    linear-gradient(#777, #777) 5px 25% / 2px 1px no-repeat,
    linear-gradient(#777, #777) 5px 75% / 2px 1px no-repeat;
}

.vruler-cells i {
  font-style: normal;
  font-size: 9px;
  color: #555;
  transform: rotate(-90deg);
}

.gutter-l {
  width: 46px;
  background: linear-gradient(90deg, #cdd1d8 70%, #b8babf);
}

.page {
  width: 1656px;
  background: #fff;
  overflow: hidden;
  padding-left: 100px;
}

.lines {
  margin-top: -35.500px;
  font-family: Lato, "Open Sans", sans-serif;
  font-size: 35.500px;
  line-height: 47.500px;
  color: #000;
  white-space: nowrap;
}

.line {
  height: 47.500px;
}

.in1 { padding-left: 100.500px; }
.in2 { padding-left: 200.500px; }
.in1b { padding-left: 111px; }

.wide { letter-spacing: .300px; }

.comment {
  color: #00a651;
  font-style: italic;
  letter-spacing: 1.280px;
}

.red { color: #f00; }

.line sup {
  font-size: 21px;
  line-height: 0;
}

.blank {
  font-size: 38px;
  letter-spacing: -.700px;
}

.sp,
.gsp {
  text-decoration: underline wavy #e42b2b 1px;
  text-underline-offset: 5px;
}

.gsp { text-decoration-color: #2d9d3a; }

.gutter-r {
  width: 43px;
  background: linear-gradient(90deg, #a4a7ac, #c2c5ca 12px, #c6cad0);
}

.vscroll {
  flex: 1;
  background: #dfe2e9;
  display: flex;
  flex-direction: column;
  align-items: center;
  color: #555;
}

.vs-tools {
  height: 20px;
  display: flex;
  flex-direction: column;
  align-items: center;
  gap: 2px;
  margin-top: -9px;
}

.vs-arrow {
  font-size: 7px;
  line-height: 10px;
  margin-top: 12px;
}

.vs-thumb {
  width: 15px;
  height: 133px;
  margin-top: 166px;
  background: linear-gradient(90deg, #f4f5f8, #dde0e6);
  border: 1px solid #8e9298;
  display: flex;
  align-items: center;
  justify-content: center;
}

.vs-thumb span {
  width: 9px;
  height: 6px;
  border-top: 1px solid #777;
  border-bottom: 1px solid #777;
  background: linear-gradient(#777, #777) center / 9px 1px no-repeat;
}

.vs-grow {
  flex: 1;
}

.vs-nav {
  font-size: 10px;
  line-height: 15.500px;
}

.vs-nav:last-child {
  margin-bottom: -8px;
}

/* zoom controls */
.zoom-bar {
  height: 66px;
  background: #1a1a1a;
  display: flex;
  color: #b0b0b0;
  font-size: 14px;
}

.zb-item {
  display: flex;
  flex-direction: column;
  align-items: center;
  justify-content: flex-end;
  padding-bottom: 5px;
  white-space: nowrap;
}

.zb-mic { width: 60px; margin-left: 28px; }
.zb-video { width: 80px; margin-left: 27px; }
.zb-part { width: 84px; margin-left: 631px; }
.zb-chat { width: 40px; margin-left: 36px; }
.zb-share { width: 100px; margin-left: 42px; color: #23d959; }

.zb-item svg {
  flex: none;
}

.zb-mic svg,
.zb-video svg {
  margin-bottom: 6px;
}

.caret {
  width: 20px;
  text-align: center;
  font-size: 16px;
  line-height: 48px;
  color: #aaa;
}

.caret-mic { margin-left: -1px; }
.caret-vid { margin-left: -4px; }
.caret-part { margin-left: 14px; }

.part-top {
  display: flex;
  align-items: flex-start;
  height: 30px;
  width: 100%;
  padding-left: 26px;
  padding-top: 1px;
}

.part-count {
  margin-left: 5px;
  font-size: 14px;
  line-height: 20px;
}

.chat-top {
  position: relative;
  height: 30px;
  padding-top: 2px;
}

.badge {
  position: absolute;
  top: -1px;
  left: 14px;
  width: 17px;
  height: 19px;
  background: #e02828;
  border-radius: 6px;
  color: #fff;
  font-size: 12px;
  font-weight: 700;
  line-height: 19px;
  text-align: center;
}

.share-ic {
  width: 29px;
  height: 23px;
  margin-bottom: 7px;
  background: #23d959;
  border-radius: 3px;
  display: flex;
  align-items: center;
  justify-content: center;
}

.leave {
  width: 77px;
  height: 34px;
  margin: 16px 15px 0 auto;
  background: #b32626;
  border-radius: 7px;
  color: #fff;
  font-weight: 700;
  font-size: 14px;
  line-height: 34px;
  text-align: center;
}

/* taskbar */
.taskbar {
  height: 50px;
  background: #e6dfdc;
  display: flex;
  align-items: center;
}

.start {
  width: 60px;
  display: flex;
  justify-content: center;
}

.search {
  width: 429px;
  height: 49px;
  margin-top: 1px;
  background: #fff;
  border: 1px solid #d8d4d2;
  border-top: none;
  display: flex;
  align-items: center;
  padding-left: 14px;
  gap: 14px;
  font-size: 17.500px;
  color: #222;
}

.task-sys {
  display: flex;
  gap: 40px;
  margin-left: 21px;
}

.task-apps {
  display: flex;
  margin-left: 22px;
}

.app {
  width: 62px;
  height: 50px;
  display: flex;
  align-items: center;
  justify-content: center;
  flex: none;
}

.app-line {
  background: linear-gradient(#0f78d4, #0f78d4) center bottom / 51px 3px no-repeat;
}

.app-on {
  background: linear-gradient(#0f78d4, #0f78d4) center bottom / 100% 3px no-repeat, #f3f0ee;
}

.tray {
  flex: 1;
  display: flex;
  align-items: center;
  color: #222;
}

.tray-en {
  margin-left: 390px;
  font-size: 13px;
  color: #fbfbfb;
}

.t-up { margin-left: 19px; }
.t-cam { margin-left: 16px; }
.t-mic { margin-left: 16px; }
.t-wifi { margin-left: 16px; }
.t-bat { margin-left: 13px; }
.t-vol { margin-left: 9px; }

.clock {
  width: 70px;
  margin-left: 14px;
  display: flex;
  flex-direction: column;
  align-items: center;
  gap: 5px;
  font-size: 13.500px;
  line-height: 18px;
}

.t-note { margin-left: 22px; }

/* overlays */
.banner {
  position: absolute;
  top: 0;
  left: 786px;
  width: 504px;
  height: 27px;
  display: flex;
  border-radius: 0 0 4px 4px;
  overflow: hidden;
  font-size: 14px;
  font-weight: 700;
  line-height: 27px;
  box-shadow: 0 1px 3px rgba(0, 0, 0, .3);
}

.banner-msg {
  width: 353px;
  background: #47c100;
  color: #2d5a19;
  text-align: center;
}

.banner-opt {
  flex: 1;
  padding-left: 34px;
  background: #1f1f1f;
  color: #e8e8e8;
  white-space: nowrap;
}

.banner-opt svg {
  margin-left: 3px;
}

.view-btn {
  position: absolute;
  top: 35px;
  left: 1841px;
  width: 68px;
  height: 33px;
  background: rgba(60, 60, 60, .28);
  border-radius: 8px;
  display: flex;
  align-items: center;
  justify-content: flex-end;
  gap: 7px;
  padding-right: 8px;
  font-size: 14px;
  color: #d6d6d6;
}

.acro-pane {
  position: absolute;
  top: 71px;
  left: 1822px;
  width: 28px;
  height: 46px;
  background: #bdbdbd;
  border-radius: 4px 0 0 4px;
  display: flex;
  flex-direction: column;
  align-items: center;
  padding-top: 7px;
  gap: 5px;
}

.acro-tiles {
  display: grid;
  grid-template-columns: 6px 6px;
  gap: 2px;
}

.acro-tiles i {
  height: 6px;
}

.acro-tiles .t-y { background: #e3a627; }
.acro-tiles .t-b { background: #2b86c6; }
.acro-tiles .t-g { background: #7f8a3a; }
.acro-tiles .t-o { background: #e0792a; }

.ink-bar {
  position: absolute;
  top: 517px;
  left: 105px;
  width: 62px;
  height: 441px;
  padding: 5px;
  background: #a9a9ab;
  border-radius: 10px;
}

.ink-inner {
  height: 100%;
  border-radius: 8px;
  background: linear-gradient(90deg, #646464 45%, #555 50%, #676767 58%);
  padding-top: 2px;
  display: flex;
  flex-direction: column;
  align-items: center;
}

.ink-ic {
  position: relative;
  height: 47.500px;
  width: 100%;
  display: flex;
  align-items: center;
  justify-content: center;
  flex: none;
}

.ink-tri {
  position: absolute;
  right: 7px;
  bottom: 5px;
  border-left: 4px solid #000;
  border-top: 3.500px solid transparent;
  border-bottom: 3.500px solid transparent;
}

.ink-cursor {
  width: 37px;
  height: 37px;
  margin: 5px 0;
  flex: none;
  border-radius: 50%;
  background: radial-gradient(#f0f0f0, #bdbdbd);
  display: flex;
  align-items: center;
  justify-content: center;
}

.ibeam {
  position: absolute;
  top: 440px;
  left: 928px;
}
```
